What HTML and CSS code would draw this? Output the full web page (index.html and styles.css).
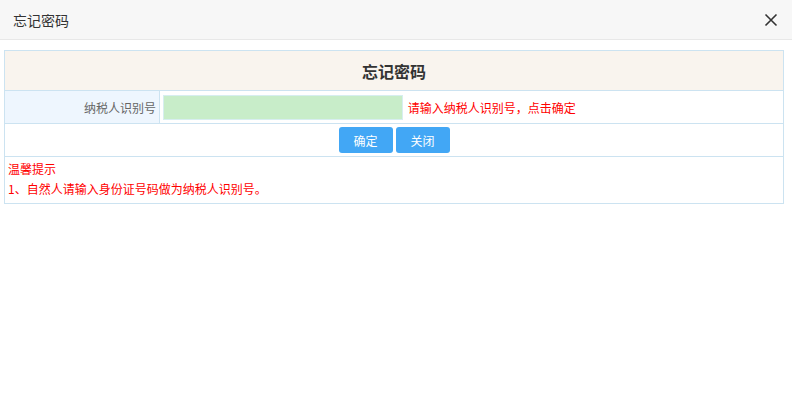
FILE: index.html
```html
<!DOCTYPE html>
<html lang="zh-CN">
<head>
  <meta charset="UTF-8">
  <title>忘记密码</title>
  <link rel="stylesheet" href="styles.css">
</head>
<body>
  <!-- Dialog title bar -->
  <div class="dialog-head">
    <span class="dialog-title">忘记密码</span>
    <button class="dialog-close" aria-label="关闭">
      <svg width="14" height="14" viewBox="0 0 14 14">
        <path d="M1.5 1.5L12.5 12.5M12.5 1.5L1.5 12.5" stroke="#333" stroke-width="1.6" fill="none"/>
      </svg>
    </button>
  </div>

  <!-- Form table -->
  <div class="dialog-body">
    <table class="form-table">
      <tr>
        <th colspan="2" class="form-caption">忘记密码</th>
      </tr>
      <tr class="row-input">
        <td class="form-label">纳税人识别号</td>
        <td class="form-field">
          <input type="text" class="field-input" id="nsrsbh">
          <span class="field-hint">请输入纳税人识别号，点击确定</span>
        </td>
      </tr>
      <tr class="row-btns">
        <td colspan="2">
          <div class="form-actions">
            <button class="btn">确定</button>
            <button class="btn">关闭</button>
          </div>
        </td>
      </tr>
      <tr class="row-tips">
        <td colspan="2" class="form-tips">
          <p>温馨提示</p>
          <p>1、自然人请输入身份证号码做为纳税人识别号。</p>
        </td>
      </tr>
    </table>
  </div>
</body>
</html>
```

FILE: styles.css
```css
/* General */
body {
  margin: 0;
  font-family: "Microsoft YaHei", "Noto Sans CJK SC", sans-serif;
  font-size: 12px;
  color: #333;
  background: #fff;
}

/* Title bar */
.dialog-head {
  height: 39px;
  background: #f7f7f7;
  border-bottom: 1px solid #e8e8e8;
  display: flex;
  align-items: center;
  justify-content: space-between;
  padding: 0 14px 0 13px;
}

.dialog-title {
  font-size: 14px;
  color: #333;
}

.dialog-close {
  background: none;
  border: none;
  padding: 0;
  width: 14px;
  height: 14px;
  cursor: pointer;
  display: flex;
}

/* Form table */
.dialog-body {
  padding: 10px 8px 0 4px;
}

.form-table {
  width: 100%;
  border-collapse: collapse;
  border: 1px solid #cce3f1;
}

.form-table td,
.form-table th {
  border: 1px solid #cce3f1;
  padding: 0;
}

.form-caption {
  height: 39px;
  background: #f9f4ee;
  font-size: 16px;
  font-weight: bold;
  color: #333;
  text-align: center;
}

.row-input td {
  height: 32px;
}

.form-label {
  width: 151px;
  background: #eef6fe;
  color: #666;
  text-align: right;
  padding-right: 3px !important;
}

.form-field {
  padding-left: 3px !important;
}

.field-input {
  box-sizing: border-box;
  width: 240px;
  height: 25px;
  border: 1px solid #d7eef0;
  background: #c8edc9;
  vertical-align: middle;
  margin: 0;
  padding: 0;
  outline: none;
}

.field-hint {
  color: #f00;
  margin-left: 2px;
  vertical-align: middle;
}

.row-btns td {
  height: 32px;
}

.form-actions {
  display: flex;
  justify-content: center;
  gap: 3px;
}

.btn {
  width: 54px;
  height: 26px;
  border: none;
  border-radius: 3px;
  background: #42a7f5;
  color: #fff;
  font-family: inherit;
  font-size: 12px;
  cursor: pointer;
  padding: 0;
}

.form-tips {
  height: 44px;
  vertical-align: top;
  padding: 2px 3px 0 !important;
}

.form-tips p {
  margin: 0;
  color: #f00;
  line-height: 20px;
}
```
